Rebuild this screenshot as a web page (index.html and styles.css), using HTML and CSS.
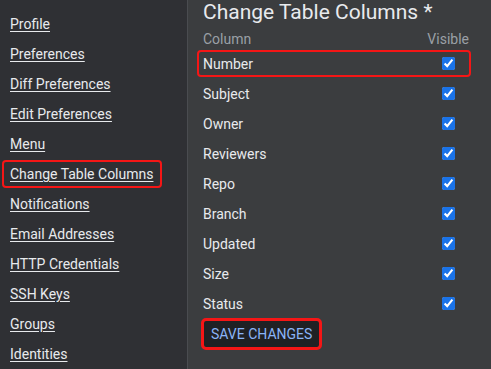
FILE: index.html
```html
<!DOCTYPE html>
<html lang="en">
<head>
    <meta charset="UTF-8">
    <title>Settings - Change Table Columns</title>
    <link rel="stylesheet" href="styles.css">
</head>
<body>
<div class="page">
    <nav class="sidebar">
        <a href="#">Profile</a>
        <a href="#">Preferences</a>
        <a href="#">Diff Preferences</a>
        <a href="#">Edit Preferences</a>
        <a href="#">Menu</a>
        <a href="#" class="marked">Change Table Columns</a>
        <a href="#">Notifications</a>
        <a href="#">Email Addresses</a>
        <a href="#">HTTP Credentials</a>
        <a href="#">SSH Keys</a>
        <a href="#">Groups</a>
        <a href="#">Identities</a>
    </nav>
    <main class="content">
        <h2>Change Table Columns *</h2>
        <table class="columns">
            <thead>
                <tr><th class="name">Column</th><th class="vis">Visible</th></tr>
            </thead>
            <tbody>
                <tr class="marked"><td>Number</td><td class="vis"><input type="checkbox" checked></td></tr>
                <tr><td>Subject</td><td class="vis"><input type="checkbox" checked></td></tr>
                <tr><td>Owner</td><td class="vis"><input type="checkbox" checked></td></tr>
                <tr><td>Reviewers</td><td class="vis"><input type="checkbox" checked></td></tr>
                <tr><td>Repo</td><td class="vis"><input type="checkbox" checked></td></tr>
                <tr><td>Branch</td><td class="vis"><input type="checkbox" checked></td></tr>
                <tr><td>Updated</td><td class="vis"><input type="checkbox" checked></td></tr>
                <tr><td>Size</td><td class="vis"><input type="checkbox" checked></td></tr>
                <tr><td>Status</td><td class="vis"><input type="checkbox" checked></td></tr>
            </tbody>
        </table>
        <div class="actions">
            <button class="save">SAVE CHANGES</button>
        </div>
    </main>
</div>
</body>
</html>
```

FILE: styles.css
```css
html, body{
    margin: 0;
    height: 100%;
}
body{
    background: #3b3d3f;
    color: #e8eaed;
    font-family: Roboto, "Liberation Sans", sans-serif;
    font-size: 14px;
    overflow: hidden;
}
.page{
    display: flex;
    height: 100%;
}
.sidebar{
    width: 188px;
    flex: none;
    background: #2f3034;
    border-right: 1px solid #4a4c50;
    padding: 9px 0 0 10px;
    box-sizing: border-box;
    display: flex;
    flex-direction: column;
    align-items: flex-start;
}
.sidebar a{
    color: #e8eaed;
    line-height: 30px;
    height: 30px;
    text-decoration: underline;
    text-underline-offset: 2px;
}
.sidebar a.marked{
    position: relative;
}
.sidebar a.marked::after{
    content: "";
    position: absolute;
    left: -8px;
    right: -9px;
    top: 1px;
    bottom: 1px;
    border: 2px solid #f51616;
    border-radius: 4px;
}
.content{
    flex: 1;
    padding: 0 22px 0 15px;
}
h2{
    font-size: 21px;
    font-weight: 400;
    margin: 0;
    height: 29px;
    line-height: 24px;
    color: #e8eaed;
}
.columns{
    width: 100%;
    border-collapse: collapse;
}
.columns th{
    font-weight: 400;
    color: #9aa0a6;
    height: 20px;
    padding: 0;
    text-align: left;
}
.columns th.vis{
    text-align: right;
}
.columns td{
    height: 30px;
    padding: 0;
}
.columns td.vis{
    text-align: right;
    padding-right: 14px;
}
.columns input{
    margin: 0 0 3px;
    width: 13px;
    height: 13px;
    vertical-align: middle;
    accent-color: #1a73e8;
}
.columns tr.marked td:first-child{
    position: relative;
}
.columns tr.marked td:first-child::after{
    content: "";
    position: absolute;
    left: -6px;
    width: 270px;
    top: 1px;
    bottom: 2px;
    border: 2px solid #f51616;
    border-radius: 4px;
}
.actions{
    padding: 2px 0 0 1px;
}
.save{
    background: #202124;
    color: #8ab4f8;
    font-family: inherit;
    font-size: 14px;
    border: none;
    border-radius: 2px;
    padding: 5px 7px;
    outline: 3px solid #f51616;
    outline-offset: 0;
}
```
